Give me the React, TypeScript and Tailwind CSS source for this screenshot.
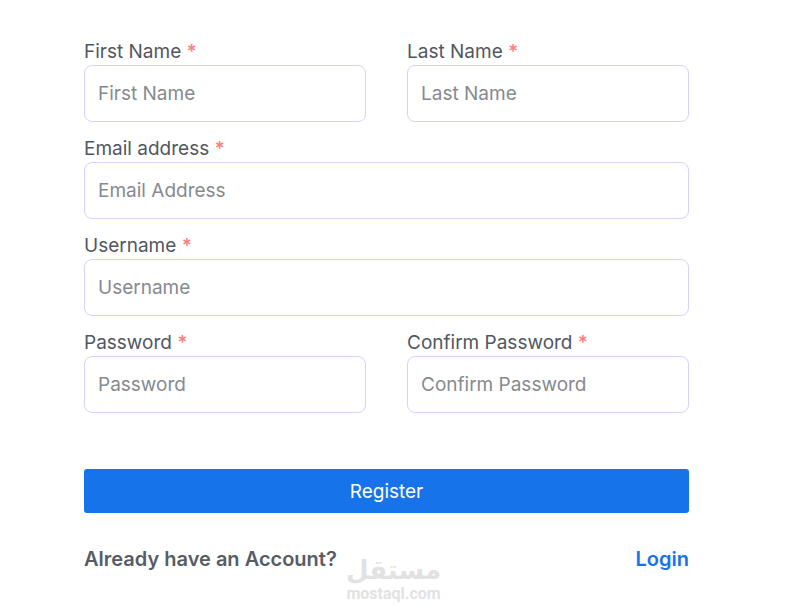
import React, { useState } from 'react';
import { clsx } from 'clsx';

interface Field {
  name: string;
  label: string;
  placeholder: string;
  type: string;
  wide?: boolean;
}

const fields: Field[] = [
  { name: 'firstName', label: 'First Name', placeholder: 'First Name', type: 'text' },
  { name: 'lastName', label: 'Last Name', placeholder: 'Last Name', type: 'text' },
  { name: 'email', label: 'Email address', placeholder: 'Email Address', type: 'email', wide: true },
  { name: 'username', label: 'Username', placeholder: 'Username', type: 'text', wide: true },
  { name: 'password', label: 'Password', placeholder: 'Password', type: 'password' },
  { name: 'confirmPassword', label: 'Confirm Password', placeholder: 'Confirm Password', type: 'password' },
];

function FormField({
  field,
  value,
  onChange,
}: {
  field: Field;
  value: string;
  onChange: (name: string, value: string) => void;
}) {
  return (
    <div className={clsx('flex min-w-0 flex-col', field.wide && 'col-span-2')}>
      <label htmlFor={field.name} className="pt-px text-[19px] leading-[26px] text-[#52575f]">
        {field.label} <span className="font-semibold text-[#fb7f84]">*</span>
      </label>
      <input
        id={field.name}
        name={field.name}
        type={field.type}
        placeholder={field.placeholder}
        value={value}
        onChange={(e) => onChange(field.name, e.target.value)}
        required
        className="h-[57px] w-full rounded-lg border border-[#d3d3fd] bg-white px-[13px] text-[19px] text-[#52575f] shadow-none outline-none placeholder:text-[#868a8f] focus:border-[#1773ea]"
      />
    </div>
  );
}

function Watermark() {
  return (
    <div className="pointer-events-none absolute bottom-3 left-1/2 flex -translate-x-1/2 flex-col items-center text-[#e2e2e2]">
      <span lang="ar" dir="rtl" className="font-['DejaVu_Sans',sans-serif] text-[26px] leading-[31px] font-bold">
        مستقل
      </span>
      <span className="font-['Roboto',sans-serif] text-[16px] leading-4 font-bold">mostaql.com</span>
    </div>
  );
}

function App() {
  const [values, setValues] = useState<Record<string, string>>({});

  const handleChange = (name: string, value: string) => {
    setValues((prev) => ({ ...prev, [name]: value }));
  };

  const handleSubmit = (e: React.FormEvent) => {
    e.preventDefault();
  };

  return (
    <main className="relative min-h-screen bg-white pt-[38px] pr-[98px] pb-10 pl-[84px] font-['Inter',sans-serif]">
      <form onSubmit={handleSubmit}>
        <div className="grid grid-cols-2 gap-x-[41px] gap-y-[13px]">
          {fields.map((field) => (
            <FormField
              key={field.name}
              field={field}
              value={values[field.name] ?? ''}
              onChange={handleChange}
            />
          ))}
        </div>

        <button
          type="submit"
          className="mt-14 h-11 w-full cursor-pointer rounded-[3px] bg-[#1773ea] pt-0.5 text-[19px] text-white"
        >
          Register
        </button>
      </form>

      <div className="mt-[33px] flex items-center justify-between text-[20px] leading-[26px] font-semibold">
        <p className="text-[#585d65]">Already have an Account?</p>
        <a href="#login" className="text-[#1773ea]">
          Login
        </a>
      </div>

      <Watermark />
    </main>
  );
}

export default App;
